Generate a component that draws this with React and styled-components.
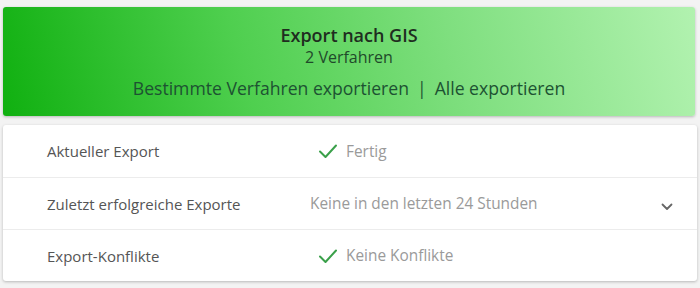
import React from "react";
import styled, { createGlobalStyle } from "styled-components";

const GlobalStyle = createGlobalStyle`
  html, body {
    margin: 0;
    padding: 0;
    background: #f3f3f3;
    font-family: "Open Sans", "Noto Sans", sans-serif;
  }
`;

const Page = styled.div`
  width: 700px;
  height: 288px;
  box-sizing: border-box;
  padding: 7px 5px 0 3px;
  display: flex;
  flex-direction: column;
  gap: 9px;
`;

const Banner = styled.section`
  height: 109px;
  border-radius: 3px;
  background: linear-gradient(75deg, #10b010 0%, #4fcf4f 35%, #7fdf7f 65%, #b2f2b0 100%);
  box-shadow: 0 1px 3px rgba(0, 0, 0, 0.25);
  display: flex;
  flex-direction: column;
  align-items: center;
  padding-top: 16px;
  box-sizing: border-box;
`;

const Title = styled.h1`
  margin: 0;
  font-size: 18px;
  font-weight: 600;
  line-height: 24px;
  color: #1f2d1f;
`;

const Subtitle = styled.div`
  font-size: 16px;
  line-height: 21px;
  color: #1f4a2a;
`;

const Actions = styled.div`
  margin-top: 8px;
  font-size: 17.6px;
  line-height: 24px;
  color: #1d5232;
  display: flex;
  gap: 8px;
`;

const ActionLink = styled.a`
  color: inherit;
  text-decoration: none;
  cursor: pointer;
`;

const Card = styled.section`
  background: #fff;
  border-radius: 3px;
  box-shadow: 0 1px 3px rgba(0, 0, 0, 0.25);
  margin-right: -2px;
`;

const Row = styled.div`
  height: 52px;
  display: grid;
  grid-template-columns: 263px 1fr 36px;
  align-items: center;
  padding-left: 44px;
  box-sizing: border-box;
  border-top: ${({ $first }) => ($first ? "none" : "1px solid #ececec")};
`;

const Label = styled.span`
  font-size: 15px;
  color: #555;
`;

const Value = styled.span`
  display: flex;
  align-items: center;
  gap: 8px;
  font-size: 15.4px;
  color: #9a9a9a;
  padding-left: ${({ $icon }) => ($icon ? "8px" : "0")};
`;

const Chevron = styled.span`
  display: flex;
  margin-top: 6px;
`;

const Check = () => (
  <svg width="20" height="16" viewBox="0 0 20 16" fill="none">
    <path d="M2 8.5 L7.5 14 L18 2.5" stroke="#3aa04a" strokeWidth="2" strokeLinecap="round" strokeLinejoin="round" />
  </svg>
);

const ChevronDown = () => (
  <svg width="12" height="8" viewBox="0 0 12 8" fill="none">
    <path d="M1.5 1.5 L6 6 L10.5 1.5" stroke="#666" strokeWidth="1.8" strokeLinecap="round" strokeLinejoin="round" />
  </svg>
);

const rows = [
  { label: "Aktueller Export", value: "Fertig", ok: true },
  { label: "Zuletzt erfolgreiche Exporte", value: "Keine in den letzten 24 Stunden", expand: true },
  { label: "Export-Konflikte", value: "Keine Konflikte", ok: true },
];

const App = () => {
  return (
    <>
      <GlobalStyle />
      <Page>
        <Banner>
          <Title>Export nach GIS</Title>
          <Subtitle>2 Verfahren</Subtitle>
          <Actions>
            <ActionLink>Bestimmte Verfahren exportieren</ActionLink>
            <span>|</span>
            <ActionLink>Alle exportieren</ActionLink>
          </Actions>
        </Banner>
        <Card>
          {rows.map((row, i) => (
            <Row key={row.label} $first={i === 0}>
              <Label>{row.label}</Label>
              <Value $icon={row.ok}>
                {row.ok && <Check />}
                {row.value}
              </Value>
              <Chevron>{row.expand && <ChevronDown />}</Chevron>
            </Row>
          ))}
        </Card>
      </Page>
    </>
  );
};

export default App;
